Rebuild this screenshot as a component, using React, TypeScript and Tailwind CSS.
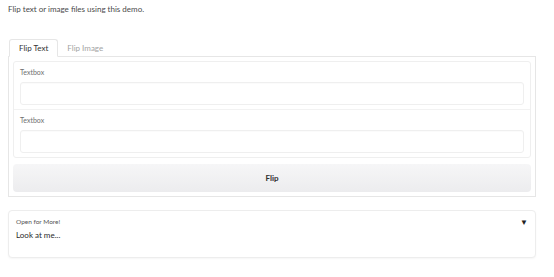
import React, { useState } from 'react'

function Textbox({ label }: { label: string }) {
  return (
    <div className="flex flex-col gap-[5px] px-[6px] pt-[5px] pb-[4px]">
      <span className="text-[7px] leading-[10px] text-[#707070]">{label}</span>
      <input className="h-[23px] w-full rounded-[3px] border border-[#efefef] bg-white shadow-[inset_0_1px_1px_rgba(0,0,0,0.02)] outline-none" />
    </div>
  )
}

export default function App() {
  const [tab, setTab] = useState('text')

  return (
    <div className="min-h-screen w-[554px] bg-white px-[8px] pt-[3px] font-['Lato','Liberation_Sans',sans-serif] text-[#3f3f3f]">
      <p className="text-[8px] leading-[12px] text-[#4a4a4a]">Flip text or image files using this demo.</p>

      <div className="mt-[24px] w-[528px]">
        <div className="flex text-[8px] leading-[12px]">
          <button
            onClick={() => setTab('text')}
            className={`relative -mb-px ml-px h-[18px] rounded-t-[3px] px-[9px] ${tab === 'text' ? 'border border-b-white border-[#e6e6e6] bg-white text-[#333333]' : 'text-[#a3a3a3]'}`}
          >
            Flip Text
          </button>
          <button
            onClick={() => setTab('image')}
            className={`relative -mb-px h-[18px] rounded-t-[3px] px-[9px] ${tab === 'image' ? 'border border-b-white border-[#e6e6e6] bg-white text-[#333333]' : 'text-[#a3a3a3]'}`}
          >
            Flip Image
          </button>
        </div>

        <div className="flex flex-col gap-[6px] border border-[#e6e6e6] p-[4px]">
          <div className="flex flex-col rounded-[3px] border border-[#efefef] bg-white">
            <Textbox label="Textbox" />
            <div className="h-px bg-[#f2f2f2]" />
            <Textbox label="Textbox" />
          </div>
          <button className="h-[28px] rounded-[4px] bg-gradient-to-b from-[#f6f6f7] to-[#ececee] text-[8px] font-bold text-[#2f2f2f]">
            Flip
          </button>
        </div>
      </div>

      <div className="mt-[13px] flex w-[528px] flex-col rounded-[4px] border border-[#ededed] bg-white px-[7px] pt-[6px] pb-[16px] shadow-[0_1px_2px_rgba(0,0,0,0.04)]">
        <div className="flex items-center justify-between">
          <span className="text-[6.5px] leading-[10px] text-[#555555]">Open for More!</span>
          <span className="text-[8px] leading-[10px] text-[#222222]">▼</span>
        </div>
        <span className="mt-[2px] text-[8px] leading-[12px] text-[#2a2a2a]">Look at me...</span>
      </div>
    </div>
  )
}
